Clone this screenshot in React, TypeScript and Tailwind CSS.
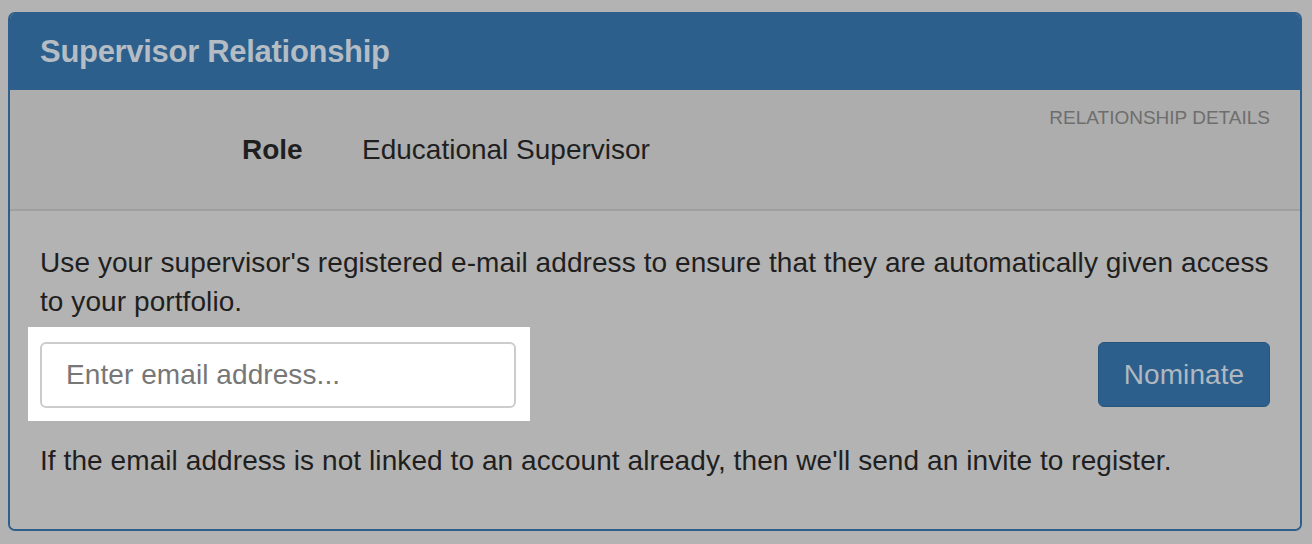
export default function App() {
  return (
    <div
      className="w-[1312px] h-[544px] bg-[#b3b3b3] pt-[12px] pl-[8px] pr-[10px]"
      style={{ fontFamily: '"Liberation Sans", Arial, sans-serif' }}
    >
      <div className="rounded-[7px] border-2 border-[#2e5f8c] overflow-hidden">
        {/* Header */}
        <div className="h-[76px] bg-[#2c5f8c] px-[30px] flex items-center">
          <h1 className="text-[31px] font-bold text-[#b4bcc4] tracking-[-0.3px]">
            Supervisor Relationship
          </h1>
        </div>

        {/* Relationship details */}
        <div className="h-[121px] bg-[#adadad] border-b-2 border-[#9f9f9f] px-[30px] pt-[17px] flex items-start justify-between">
          <div className="flex items-center mt-[27px] ml-[202px] text-[28px] leading-[32px] text-[#1f1f1f]">
            <span className="w-[120px] font-bold">Role</span>
            <span>Educational Supervisor</span>
          </div>
          <span className="text-[19px] leading-[22px] text-[#6e6e6e]">
            RELATIONSHIP DETAILS
          </span>
        </div>

        {/* Nominate form */}
        <div className="bg-[#b3b3b3] px-[30px] pt-[32px] pb-[49px] text-[28px] leading-[39px] tracking-[0.08px] text-[#1f1f1f]">
          <p>
            Use your supervisor's registered e-mail address to ensure that they are automatically given access
            to your portfolio.
          </p>
          <div className="flex items-center justify-between mt-[6px]">
            <div className="-ml-[12px] bg-white pl-[12px] pr-[14px] pt-[15px] pb-[13px]">
              <input
                type="email"
                placeholder="Enter email address..."
                className="block w-[476px] h-[66px] rounded-[6px] border-2 border-[#cccccc] bg-white px-[24px] text-[28px] text-[#333] placeholder:text-[#777777] outline-none"
              />
            </div>
            <button className="w-[172px] h-[65px] rounded-[6px] bg-[#2c5f8c] border border-[#275580] text-[28px] text-[#b0b8c0]">
              Nominate
            </button>
          </div>
          <p className="mt-[20px]">
            If the email address is not linked to an account already, then we'll send an invite to register.
          </p>
        </div>
      </div>
    </div>
  )
}
